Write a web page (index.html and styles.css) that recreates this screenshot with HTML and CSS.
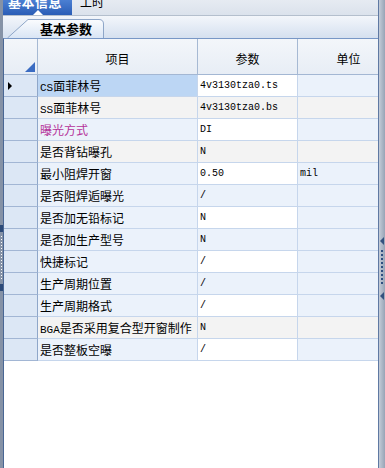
FILE: index.html
```html
<!DOCTYPE html>
<html lang="zh-CN">
<head>
    <meta charset="UTF-8">
    <title>基本参数</title>
    <link rel="stylesheet" href="styles.css">
</head>
<body>
    <div class="window">
        <div class="side-left">
            <span class="mark"></span>
            <span class="dots"></span>
            <span class="mark"></span>
        </div>

        <div class="main">
            <div class="topbar">
                <div class="toptab active"><span class="label">基本信息</span><span class="caret"></span></div>
                <div class="toptab"><span class="label">工时</span></div>
            </div>

            <div class="subbar">
                <div class="subtab">
                    <svg class="tabshape" width="97" height="19" viewBox="0 0 97 19">
                        <defs>
                            <linearGradient id="tabfill" x1="0" y1="0" x2="0" y2="1">
                                <stop offset="0" stop-color="#fbfcfe"/>
                                <stop offset="1" stop-color="#d9e5f5"/>
                            </linearGradient>
                        </defs>
                        <path d="M0.5 19 L21 0.5 L92 0.5 Q96.5 0.5 96.5 5 L96.5 19" fill="url(#tabfill)" stroke="#8ea6c8"/>
                    </svg>
                    <span class="tabtext">基本参数</span>
                </div>
            </div>

            <div class="grid">
                <div class="row head">
                    <div class="cell rowhead corner"><span class="tri"></span></div>
                    <div class="cell">项目</div>
                    <div class="cell">参数</div>
                    <div class="cell">单位</div>
                </div>

                <div class="row edit current">
                    <div class="cell rowhead"><span class="pointer"></span></div>
                    <div class="cell name"><span class="lat">CS</span>面菲林号</div>
                    <div class="cell value">4v3130tza0.ts</div>
                    <div class="cell value"></div>
                </div>
                <div class="row alt">
                    <div class="cell rowhead"></div>
                    <div class="cell name"><span class="lat">SS</span>面菲林号</div>
                    <div class="cell value">4v3130tza0.bs</div>
                    <div class="cell value"></div>
                </div>
                <div class="row edit">
                    <div class="cell rowhead"></div>
                    <div class="cell name pink">曝光方式</div>
                    <div class="cell value">DI</div>
                    <div class="cell value"></div>
                </div>
                <div class="row alt">
                    <div class="cell rowhead"></div>
                    <div class="cell name">是否背钻曝孔</div>
                    <div class="cell value">N</div>
                    <div class="cell value"></div>
                </div>
                <div class="row edit">
                    <div class="cell rowhead"></div>
                    <div class="cell name">最小阻焊开窗</div>
                    <div class="cell value">0.50</div>
                    <div class="cell value">mil</div>
                </div>
                <div class="row">
                    <div class="cell rowhead"></div>
                    <div class="cell name">是否阻焊逅曝光</div>
                    <div class="cell value">/</div>
                    <div class="cell value"></div>
                </div>
                <div class="row edit">
                    <div class="cell rowhead"></div>
                    <div class="cell name">是否加无铅标记</div>
                    <div class="cell value">N</div>
                    <div class="cell value"></div>
                </div>
                <div class="row">
                    <div class="cell rowhead"></div>
                    <div class="cell name">是否加生产型号</div>
                    <div class="cell value">N</div>
                    <div class="cell value"></div>
                </div>
                <div class="row edit">
                    <div class="cell rowhead"></div>
                    <div class="cell name">快捷标记</div>
                    <div class="cell value">/</div>
                    <div class="cell value"></div>
                </div>
                <div class="row">
                    <div class="cell rowhead"></div>
                    <div class="cell name">生产周期位置</div>
                    <div class="cell value">/</div>
                    <div class="cell value"></div>
                </div>
                <div class="row edit">
                    <div class="cell rowhead"></div>
                    <div class="cell name">生产周期格式</div>
                    <div class="cell value">/</div>
                    <div class="cell value"></div>
                </div>
                <div class="row alt">
                    <div class="cell rowhead"></div>
                    <div class="cell name"><span class="lat">BGA</span>是否采用复合型开窗制作</div>
                    <div class="cell value">N</div>
                    <div class="cell value"></div>
                </div>
                <div class="row edit">
                    <div class="cell rowhead"></div>
                    <div class="cell name">是否整板空曝</div>
                    <div class="cell value">/</div>
                    <div class="cell value"></div>
                </div>
            </div>
        </div>

        <div class="side-right">
            <span class="arrow"></span>
            <span class="dots"></span>
            <span class="arrow"></span>
        </div>
    </div>
</body>
</html>
```

FILE: styles.css
```css
html, body {
    margin: 0;
    padding: 0;
}

body {
    width: 385px;
    height: 468px;
    overflow: hidden;
    font-family: "Noto Sans CJK SC", "Liberation Sans", sans-serif;
    font-size: 12px;
    color: #000;
    background: #fff;
}

.window {
    display: flex;
    height: 468px;
}

/* left collapsed splitter */
.side-left {
    width: 3px;
    background: #8592a6;
    display: flex;
    flex-direction: column;
    align-items: center;
    padding-top: 225px;
    box-sizing: border-box;
}

.side-left .mark {
    width: 3px;
    height: 7px;
    background: #2c4a78;
}

.side-left .dots {
    width: 1px;
    height: 44px;
    margin: 4px 0;
    background: repeating-linear-gradient(#ffffff 0 1px, transparent 1px 3px);
}

/* right splitter */
.side-right {
    width: 7px;
    border-left: 1px solid #5f79a3;
    background: linear-gradient(to right, #c4ccd8, #98a4b6);
    box-sizing: border-box;
    display: flex;
    flex-direction: column;
    align-items: center;
    padding-top: 237px;
}

.side-right .arrow {
    width: 0;
    height: 0;
    border-top: 4px solid transparent;
    border-bottom: 4px solid transparent;
    border-right: 4px solid #33527f;
}

.side-right .dots {
    width: 2px;
    height: 36px;
    margin: 5px 0 6px;
    background: repeating-linear-gradient(#2f4f80 0 2px, transparent 2px 4px);
}

.main {
    flex: 1;
    display: flex;
    flex-direction: column;
    min-width: 0;
}

/* top tab strip */
.topbar {
    height: 15px;
    display: flex;
    background: linear-gradient(#e6ebf2, #dbe2ec);
    border-bottom: 1px solid #b4bfcd;
    overflow: hidden;
}

.toptab {
    position: relative;
    height: 15px;
    padding: 0 8px;
}

.toptab .label {
    display: block;
    line-height: 13px;
    margin-top: -5px;
    font-size: 12px;
}

.toptab.active {
    width: 69px;
    box-sizing: border-box;
    padding: 0 0 0 5px;
    background: linear-gradient(#4b7fd2, #2a5db6);
    color: #fff;
    margin-right: 0;
}

.toptab.active .label {
    font-size: 13px;
    font-weight: bold;
    letter-spacing: 0.5px;
}

.caret {
    position: absolute;
    left: 30px;
    bottom: 0;
    width: 0;
    height: 0;
    border-left: 5px solid transparent;
    border-right: 5px solid transparent;
    border-bottom: 5px solid #ffffff;
}

/* sub tab strip */
.subbar {
    height: 22px;
    background: linear-gradient(#f3f6fb, #d5e0ef);
    display: flex;
    align-items: flex-end;
}

.subtab {
    position: relative;
    width: 97px;
    height: 19px;
    margin-left: 4px;
}

.tabshape {
    position: absolute;
    left: 0;
    top: 0;
}

.tabtext {
    position: relative;
    display: block;
    padding-left: 33px;
    line-height: 19px;
    font-size: 13px;
    font-weight: bold;
}

/* data grid */
.grid {
    flex: 1;
    border-top: 1px solid #7897c6;
    border-left: 1px solid #4a6794;
    background: #fff;
    overflow: hidden;
}

.row {
    display: grid;
    grid-template-columns: 34px 160px 100px 102px;
    height: 22px;
    background: #ebf2fb;
}

.cell {
    box-sizing: border-box;
    border-right: 1px solid #c6d6ec;
    border-bottom: 1px solid #c6d6ec;
    padding-left: 2px;
    line-height: 21px;
    white-space: nowrap;
    overflow: hidden;
}

.row.head {
    height: 36px;
    background: linear-gradient(#f3f6fa, #e7edf5);
}

.row.head .cell {
    text-align: center;
    padding: 4px 0 0;
    line-height: 32px;
    border-right-color: #a6b9d3;
    border-bottom-color: #a3b7d3;
}

.rowhead {
    position: relative;
    background: #dce7f5;
    border-right-color: #8fa7c9;
    border-bottom-color: #a2b6d4;
}

.row.head .rowhead {
    background: linear-gradient(#f3f6fa, #e7edf5);
}

.tri {
    position: absolute;
    right: 2px;
    bottom: 2px;
    width: 0;
    height: 0;
    border-left: 10px solid transparent;
    border-bottom: 10px solid #3b6cc2;
}

.pointer {
    position: absolute;
    left: 4px;
    top: 7px;
    width: 0;
    height: 0;
    border-top: 4px solid transparent;
    border-bottom: 4px solid transparent;
    border-left: 4px solid #000;
}

.row.edit .cell.value:nth-child(3) {
    background: #fff;
}

.row.alt {
    background: #f3f3f3;
}

.row.current .name {
    background: #bcd6f4;
}

.value {
    font-family: "Liberation Mono", monospace;
    font-size: 10px;
}

.lat {
    font-family: "Liberation Mono", monospace;
    font-size: 11px;
}

.pink {
    color: #b5329a;
}
```
